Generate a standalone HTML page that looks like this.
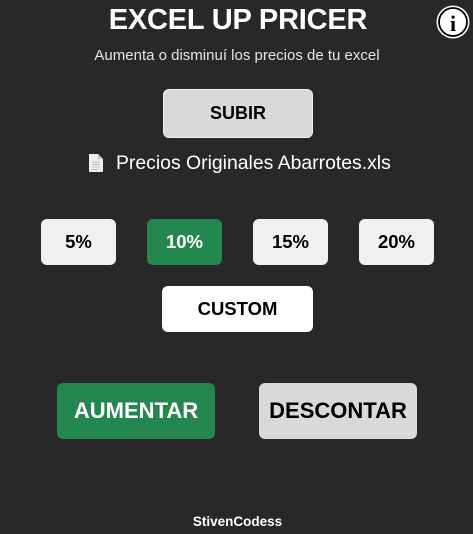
<!DOCTYPE html>
<html><head><meta charset="utf-8"><style>
html,body{margin:0;padding:0}
body{width:473px;height:534px;background:#282828;position:relative;overflow:hidden;font-family:"Liberation Sans",sans-serif}
.a{position:absolute;display:flex;align-items:center;justify-content:center;box-sizing:border-box;font-weight:bold}
.t{position:absolute;white-space:nowrap;text-align:center}
</style></head><body>
<div class="t" style="left:0;width:476px;top:4px;font-size:29px;font-weight:bold;color:#fff;letter-spacing:-0.2px">EXCEL UP PRICER</div>
<svg style="position:absolute;left:436px;top:5px" width="34" height="34" viewBox="0 0 34 34">
<circle cx="17" cy="17" r="16.5" fill="#fff"/>
<circle cx="17" cy="17" r="14" fill="none" stroke="#000" stroke-width="1.8"/>
<text x="17" y="26" text-anchor="middle" font-family="Liberation Serif,serif" font-weight="bold" font-size="22" fill="#000">i</text>
</svg>
<div class="t" style="left:0;width:474px;top:47px;font-size:15px;color:#e6e6e6">Aumenta o disminuí los precios de tu excel</div>
<div class="a" style="left:163px;top:89px;width:150px;height:49px;background:#d9d9d9;border:1px solid #f2f2f2;border-radius:6px;font-size:18px;color:#000">SUBIR</div>
<svg style="position:absolute;left:88px;top:153px" width="16" height="20" viewBox="0 0 16 20">
<path d="M1 1h9l5 5v13H1z" fill="#eee"/><path d="M10 1v5h5" fill="#ccc"/>
<path d="M4 9h8M4 11.5h8M4 14h8M4 16.5h6" stroke="#bbb" stroke-width="1"/>
</svg>
<div class="t" style="left:116px;top:152px;font-size:19.4px;color:#fff">Precios Originales Abarrotes.xls</div>
<div class="a" style="left:41px;top:219px;width:75px;height:46px;background:#f0f0f0;border-radius:6px;font-size:18.5px;color:#000">5%</div>
<div class="a" style="left:147px;top:219px;width:75px;height:46px;background:#258750;border-radius:6px;font-size:18.5px;color:#fff">10%</div>
<div class="a" style="left:253px;top:219px;width:75px;height:46px;background:#f0f0f0;border-radius:6px;font-size:18.5px;color:#000">15%</div>
<div class="a" style="left:359px;top:219px;width:75px;height:46px;background:#f0f0f0;border-radius:6px;font-size:18.5px;color:#000">20%</div>
<div class="a" style="left:162px;top:286px;width:151px;height:46px;background:#fff;border-radius:6px;font-size:18.5px;color:#000">CUSTOM</div>
<div class="a" style="left:57px;top:383px;width:158px;height:56px;background:#258750;border-radius:6px;font-size:22px;color:#fff">AUMENTAR</div>
<div class="a" style="left:259px;top:383px;width:158px;height:56px;background:#d9d9d9;border-radius:6px;font-size:22px;color:#000">DESCONTAR</div>
<div class="t" style="left:0;width:475px;top:514px;font-size:13.5px;font-weight:bold;color:#fff">StivenCodess</div>
</body></html>
